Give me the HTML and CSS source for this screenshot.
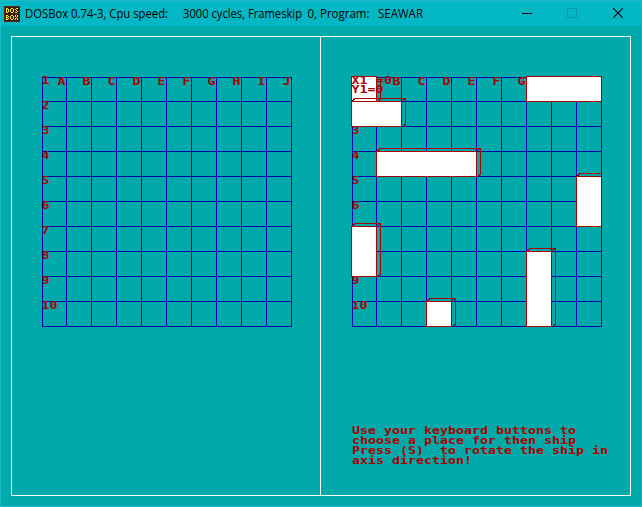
FILE: index.html
```
<!DOCTYPE html>
<html lang="en">
<head>
<meta charset="utf-8">
<title>DOSBox - SEAWAR</title>
<link rel="stylesheet" href="styles.css">
</head>
<body>
<div class="window">
  <header class="titlebar">
    <svg class="logo" width="16" height="16" viewBox="0 0 16 16">
      <rect width="16" height="16" fill="#5a2410"/>
      <rect x="1" y="1" width="14" height="14" fill="#3c1a08"/>
      <g fill="none" stroke="#f8e820">
        <path d="M2.5 2v5M2 2.5h2M4.5 3v3M2 6.5h2M6.500 3v3M7 2.500h2M9.500 3v3M7 6.500h2M14 2.500h-2M11.500 3v1M12 4.500h1M13.500 5v1M11 6.500h2"/>
        <path d="M2.500 9v5M2 9.500h2M4.500 10v1M2 11.500h2M4.500 12v1M2 13.500h2M6.500 10v3M7 9.500h2M9.500 10v3M7 13.500h2M11.500 9v2M13.500 9v2M12.500 11v1M11.500 12v2M13.500 12v2"/>
      </g>
    </svg>
    <svg class="caption" width="405" height="25">
      <text x="0" y="16.500" textLength="143" lengthAdjust="spacingAndGlyphs">DOSBox 0.74-3, Cpu speed:</text>
      <text x="158" y="16.500" textLength="119" lengthAdjust="spacingAndGlyphs">3000 cycles, Frameskip</text>
      <text x="282.500" y="16.500" textLength="62" lengthAdjust="spacingAndGlyphs">0, Program:</text>
      <text x="353" y="16.500" textLength="45" lengthAdjust="spacingAndGlyphs">SEAWAR</text>
    </svg>
    <div class="controls">
      <svg width="10" height="10"><path d="M0 5.500h10" stroke="#000"/></svg>
      <svg width="10" height="10"><rect x=".5" y=".5" width="9" height="9" fill="none" stroke="#039aa5"/></svg>
      <svg width="10" height="10"><path d="M.2 .2l9.600 9.600M9.800 .2l-9.600 9.600" stroke="#000" stroke-width="1.100"/></svg>
    </div>
  </header>
  <main class="screen">
    <section class="panel">
      <svg class="board" id="own" width="270" height="260" viewBox="34 70 270 260"></svg>
    </section>
    <section class="panel">
      <svg class="board" id="fleet" width="270" height="260" viewBox="34 70 270 260"></svg>
      <svg class="message" width="264" height="44">
        <text x="0" y="9" textLength="224" lengthAdjust="spacingAndGlyphs">Use your keyboard buttons to</text>
        <text x="0" y="19" textLength="224" lengthAdjust="spacingAndGlyphs">choose a place for then ship</text>
        <text x="0" y="29" textLength="256" lengthAdjust="spacingAndGlyphs">Press (S)  to rotate the ship in</text>
        <text x="0" y="39" textLength="120" lengthAdjust="spacingAndGlyphs">axis direction!</text>
      </svg>
    </section>
  </main>
</div>
<script src="board.js"></script>
</body>
</html>
```
FILE: styles.css
```
* { box-sizing: border-box; }
body { margin: 0; background: #00aaaa; overflow: hidden; }
svg { display: block; }

.window {
  width: 642px;
  height: 507px;
  display: flex;
  flex-direction: column;
  background: #00aaaa;
  border: 1px solid #1bb9c7;
  border-right-color: #12b8c4;
}

.titlebar {
  display: flex;
  align-items: center;
  height: 25px;
  flex: none;
  padding-left: 3px;
  background: #03b7c5;
}
.logo { shape-rendering: crispEdges; }
.caption { margin-left: 5px; flex: none; }
.caption text {
  font: 12.300px "Open Sans", "Noto Sans", sans-serif;
  fill: #000;
}
.controls {
  display: flex;
  gap: 36px;
  margin: -1px 0 0 92px;
}
.controls svg:nth-child(-n+2) { shape-rendering: crispEdges; }
.controls svg:nth-child(2) { margin-left: -1px; }

.screen {
  display: grid;
  grid-template-columns: 308px 310px;
  width: 620px;
  height: 460px;
  margin: 10px 0 0 10px;
  border: 1px solid #fff;
}
.panel { padding: 33px 0 0 22px; }
.panel + .panel { border-left: 1px solid #fff; padding-left: 23px; }

.board text, .message text {
  font: bold 9.600px "DejaVu Sans Mono", monospace;
  fill: #aa0000;
  white-space: pre;
}
.board path, .board rect { shape-rendering: crispEdges; }
.grid { fill: none; stroke: #0000aa; }
.edge { fill: none; stroke: #aa0000; }
.hull { fill: #fff; stroke: #aa0000; }
.message { margin: 95px 0 0 8px; }
```
FILE: board.js
```
const NS = "http://www.w3.org/2000/svg";
const add = (svg, tag, attrs, text) => {
  const el = document.createElementNS(NS, tag);
  for (const key in attrs) el.setAttribute(key, attrs[key]);
  if (text) el.textContent = text;
  svg.appendChild(el);
};
const label = (svg, x, baseline, text) =>
  add(svg, "text", { x, y: baseline, textLength: text.length * 8, lengthAdjust: "spacingAndGlyphs" }, text);

function drawBoard(svg) {
  let d = "";
  for (let i = 0; i <= 10; i++) {
    const x = i ? 41.5 + i * 25 : 42.5;
    const y = i ? 76.5 + i * 25 : 77.5;
    d += `M${x} 77V327M42 ${y}H292`;
  }
  add(svg, "path", { class: "grid", d });
}

function drawLabels(svg, letters, numbers) {
  letters.forEach(i => label(svg, 57.5 + i * 25, 85.3, "ABCDEFGHIJ"[i]));
  numbers.forEach(n => label(svg, 41.5, n === 1 ? 84.3 : 59.3 + n * 25, String(n)));
}

// Ships are given in board cells: column, row, width, height.
function drawShip(svg, [col, row, w, h]) {
  const x = 41.5 + col * 25, y = 76.5 + row * 25;
  const r = x + w * 25, b = y + h * 25;
  if (col + w < 10) {
    const top = row ? y - 3 : y;
    add(svg, "path", { class: "edge", d: `M${r + 4} ${top}V${b - 3}l-1 2h-2` + (row ? `M${r} ${y}l2 -2h2` : "") });
  }
  if (row) {
    const end = col + w < 10 ? r + 4 : r;
    add(svg, "path", { class: "edge", d: `M${x} ${y - 1}h2l1 -2H${end + .5}` });
  }
  add(svg, "rect", { class: "hull", x, y, width: w * 25, height: h * 25 });
}

const own = document.getElementById("own");
drawBoard(own);
drawLabels(own, [0, 1, 2, 3, 4, 5, 6, 7, 8, 9], [1, 2, 3, 4, 5, 6, 7, 8, 9, 10]);

const fleet = document.getElementById("fleet");
drawBoard(fleet);
drawLabels(fleet, [1, 2, 3, 4, 5, 6], [3, 4, 5, 6, 9, 10]);
[[0, 0, 1, 1], [0, 1, 2, 1], [1, 3, 4, 1], [7, 0, 3, 1], [9, 4, 1, 2],
 [0, 6, 1, 2], [3, 9, 1, 1], [7, 7, 1, 3]].forEach(ship => drawShip(fleet, ship));
label(fleet, 41.5, 84, "X1");
label(fleet, 66, 84, "=0");
label(fleet, 41.5, 93.3, "Y1=0");
```
